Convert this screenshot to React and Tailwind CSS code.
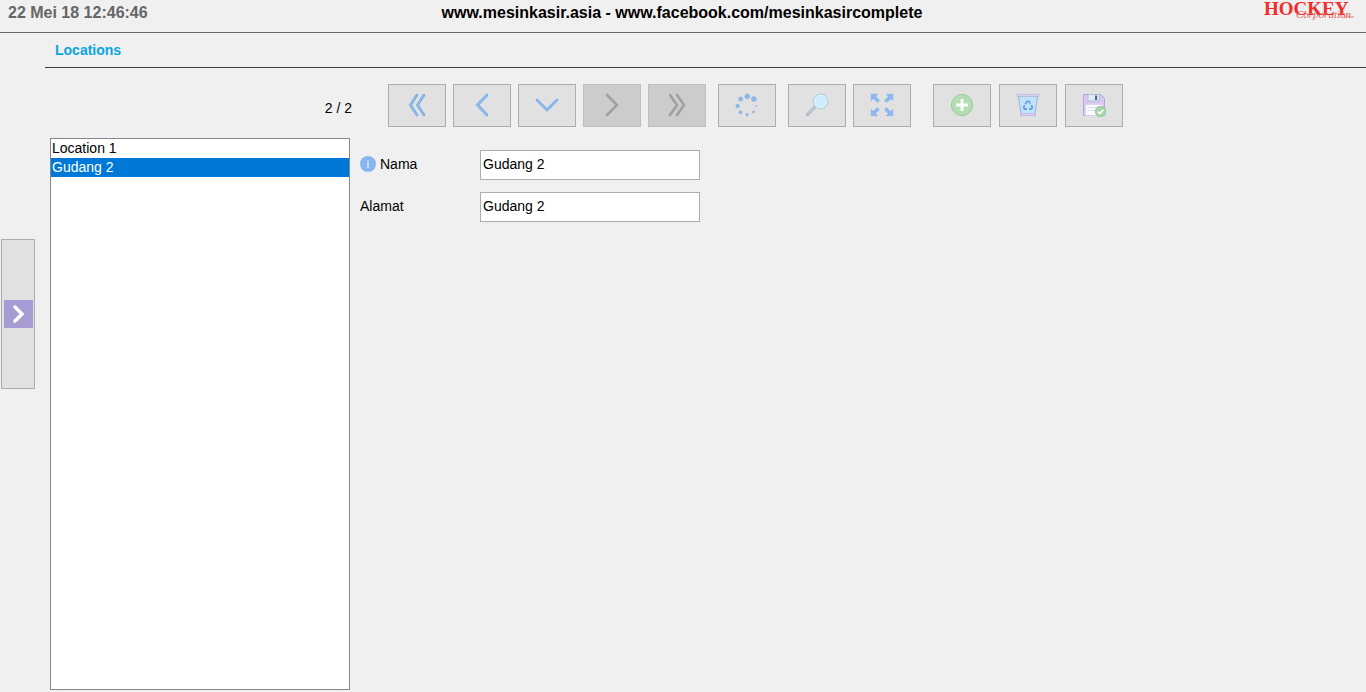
import React, { useState } from 'react';
import clsx from 'clsx';

const initialLocations = [
  { id: 1, name: 'Location 1', address: 'Location 1' },
  { id: 2, name: 'Gudang 2', address: 'Gudang 2' },
];

function Chevrons({ points, disabled }) {
  return (
    <svg width="24" height="24" viewBox="0 0 24 24" fill="none" strokeLinecap="round" strokeLinejoin="miter">
      {points.map((p) => (
        <g key={p}>
          <polyline points={p} stroke={disabled ? '#a0a0a0' : '#76a3dc'} strokeWidth="2.6" />
          {!disabled && <polyline points={p} stroke="#8fc4fa" strokeWidth="1.2" />}
        </g>
      ))}
    </svg>
  );
}

function SpinnerIcon() {
  const dots = [
    [12.3, 3.4, 2.4], [18.9, 6, 2.4], [21.3, 13, 0.6], [18.6, 19, 1],
    [12, 21.8, 1.2], [5.4, 19.3, 1.5], [2.7, 13, 1.8], [5.6, 6, 2.1],
  ];
  return (
    <svg width="24" height="24" viewBox="0 0 24 24" fill="#8ab8f2" stroke="#7aa5dd" strokeWidth="0.5">
      {dots.map(([x, y, r]) => (
        <circle key={`${x}-${y}`} cx={x} cy={y} r={r} />
      ))}
    </svg>
  );
}

function SearchIcon() {
  return (
    <svg width="24" height="24" viewBox="0 0 24 24" fill="none" strokeLinecap="round">
      <path d="M2.5 21.5 L10.5 13.5" stroke="#9aaab8" strokeWidth="3" />
      <path d="M2.7 21.3 L10.3 13.7" stroke="#c9d3e4" strokeWidth="1.4" />
      <circle cx="15.5" cy="8.5" r="7.3" fill="#d0ebff" stroke="#a9c6d6" strokeWidth="1" />
      <circle cx="15.5" cy="8.5" r="6.3" stroke="#dcfaff" strokeWidth="1" />
    </svg>
  );
}

function ExpandIcon() {
  return (
    <svg width="24" height="24" viewBox="0 0 24 24" fill="#8ab8f5" stroke="#80aae4" strokeWidth="0.5">
      {[0, 90, 180, 270].map((deg) => (
        <path key={deg} transform={`rotate(${deg} 12 12)`} d="M1.2 1.2 H7.6 L5.8 3.4 L9.6 7.2 L7.4 9.4 L3.6 5.6 L1.2 7.6 Z" />
      ))}
    </svg>
  );
}

function AddIcon() {
  return (
    <svg width="24" height="24" viewBox="0 0 24 24">
      <circle cx="12" cy="12" r="10.6" fill="#b2deb2" stroke="#9fc9a5" />
      <path d="M12 6 V18 M6 12 H18" stroke="#fff" strokeWidth="2.8" />
    </svg>
  );
}

function TrashIcon() {
  return (
    <svg width="24" height="24" viewBox="0 0 24 24">
      <path d="M2.5 3 H21.5 L18.9 21.5 H5.1 Z" fill="#bde4fd" stroke="#99b6dc" />
      <rect x="1.2" y="1.2" width="21.6" height="2.2" fill="#dacdf0" stroke="#b9addb" strokeWidth="0.6" />
      <rect x="4.3" y="20.7" width="15.4" height="2.1" fill="#dacdf0" stroke="#b9addb" strokeWidth="0.6" />
      <g fill="none" stroke="#709cd8" strokeWidth="1.8">
        <path d="M9.2 11.3 L11 8.3 H13 L14.3 10.6" />
        <path d="M15.2 12.2 L16.4 14.5 L15.4 16 H13" />
        <path d="M11 16 H8.5 L7.6 14.5 L8.7 12.4" />
      </g>
    </svg>
  );
}

function SaveIcon() {
  return (
    <svg width="24" height="24" viewBox="0 0 24 24">
      <path d="M1.5 1.5 H18.5 L22.5 5.5 V22.5 H1.5 Z" fill="#d9c9ef" stroke="#b7a5d6" />
      <rect x="6" y="1.5" width="11.5" height="6.5" fill="#dfeaf5" stroke="#a9b5ca" strokeWidth="0.8" />
      <rect x="13" y="2.5" width="2.2" height="4.5" fill="#52658f" />
      <rect x="3.5" y="11.5" width="17" height="11" fill="#f8f9ff" stroke="#d4cde5" strokeWidth="0.6" />
      <path d="M5.5 14.5 H16 M5.5 17.5 H13" stroke="#dde0ec" />
      <circle cx="18.5" cy="18.5" r="5.2" fill="#a5d5a7" stroke="#8fc295" strokeWidth="0.8" />
      <path d="M15.8 18.6 L17.8 20.6 L21.4 16.6" fill="none" stroke="#fff" strokeWidth="1.6" />
    </svg>
  );
}

function Logo() {
  return (
    <svg
      width="92"
      height="22"
      viewBox="0 0 92 22"
      role="img"
      aria-label="Hockey Corporation"
      className="overflow-visible"
    >
      <text x="0" y="14" fontFamily="'Liberation Serif', serif" fontWeight="700" fontSize="19" fill="#f22b2b">
        HOCKEY
      </text>
      <text x="32" y="17" fontFamily="'Liberation Serif', serif" fontStyle="italic" fontWeight="400" fontSize="11" fill="#e0605f">
        Corporation
      </text>
      <path d="M80 17 C83 15 84 14 85 16 C86 17 88 15 90 16" fill="none" stroke="#e0605f" strokeWidth="0.8" />
    </svg>
  );
}

function ToolButton({ label, disabled, onClick, children }) {
  return (
    <button
      type="button"
      aria-label={label}
      disabled={disabled}
      onClick={onClick}
      className={clsx(
        'flex h-[43px] w-[58px] items-center justify-center border pb-px',
        disabled ? 'border-[#bfbfbf] bg-[#cccccc]' : 'border-[#adadad] bg-[#e1e1e1] hover:bg-[#e5f1fb]'
      )}
    >
      {children}
    </button>
  );
}

export default function App() {
  const [locations, setLocations] = useState(initialLocations);
  const [selected, setSelected] = useState(1);

  const current = locations[selected];
  const isFirst = selected === 0;
  const isLast = selected === locations.length - 1;

  const updateField = (field, value) => {
    setLocations((prev) => prev.map((loc, i) => (i === selected ? { ...loc, [field]: value } : loc)));
  };

  return (
    <div className="flex min-h-screen flex-col bg-[#f0f0f0] font-['Liberation_Sans',Arial,sans-serif] text-sm text-black">
      <header className="grid h-[33px] grid-cols-[1fr_auto_1fr] items-start border-b border-[#696969] pt-px pr-[10px] pl-2 font-bold">
        <time className="text-base text-[#666666]">22 Mei 18 12:46:46</time>
        <p className="text-base">www.mesinkasir.asia - www.facebook.com/mesinkasircomplete</p>
        <div className="flex justify-end">
          <Logo />
        </div>
      </header>

      <div className="flex flex-1">
        <aside className="w-[45px] shrink-0 pt-[206px] pl-px">
          <button
            type="button"
            aria-label="Open menu"
            className="flex h-[150px] w-[34px] items-center justify-center border border-[#adadad] bg-[#e1e1e1]"
          >
            <svg width="30" height="28" viewBox="0 0 30 28">
              <rect x="1" width="29" height="28" fill="#a69bd2" />
              <path d="M12 7 L19 14 L12 21" fill="none" stroke="#fff" strokeWidth="3.5" strokeLinecap="round" />
            </svg>
          </button>
        </aside>

        <main className="flex flex-1 flex-col">
          <div className="h-[35px] border-b border-[#404040] pt-[7px] pl-[10px]">
            <h1 className="font-bold text-[#0aa5de]">Locations</h1>
          </div>

          <div className="flex items-center gap-9 pt-4 pl-[5px]">
            <span className="mt-1 w-[302px] text-right">
              {selected + 1} / {locations.length}
            </span>
            <div className="flex gap-3">
              <div className="flex gap-[7px]">
                <ToolButton label="First" disabled={isFirst} onClick={() => setSelected(0)}>
                  <Chevrons points={['12 2 5.5 12 12 22', '19 2 12.5 12 19 22']} disabled={isFirst} />
                </ToolButton>
                <ToolButton label="Previous" disabled={isFirst} onClick={() => setSelected(selected - 1)}>
                  <Chevrons points={['17 2 7.5 12 17 22']} disabled={isFirst} />
                </ToolButton>
                <ToolButton label="Refresh">
                  <Chevrons points={['2 7 12 17 22 7']} />
                </ToolButton>
                <ToolButton label="Next" disabled={isLast} onClick={() => setSelected(selected + 1)}>
                  <Chevrons points={['7 2 17 12 7 22']} disabled={isLast} />
                </ToolButton>
                <ToolButton label="Last" disabled={isLast} onClick={() => setSelected(locations.length - 1)}>
                  <Chevrons points={['5 2 12 12 5 22', '12 2 19 12 12 22']} disabled={isLast} />
                </ToolButton>
              </div>
              <ToolButton label="Reload">
                <SpinnerIcon />
              </ToolButton>
              <div className="flex gap-[7px]">
                <ToolButton label="Search">
                  <SearchIcon />
                </ToolButton>
                <ToolButton label="Sort">
                  <ExpandIcon />
                </ToolButton>
              </div>
              <div className="ml-[10px] flex gap-2">
                <ToolButton label="Add">
                  <AddIcon />
                </ToolButton>
                <ToolButton label="Delete">
                  <TrashIcon />
                </ToolButton>
                <ToolButton label="Save">
                  <SaveIcon />
                </ToolButton>
              </div>
            </div>
          </div>

          <div className="flex flex-1 gap-[10px] pt-[11px] pb-[2px] pl-[5px]">
            <ul className="w-[300px] border border-[#828790] bg-white">
              {locations.map((loc, index) => (
                <li key={loc.id}>
                  <button
                    type="button"
                    onClick={() => setSelected(index)}
                    className={clsx(
                      'block h-[19px] w-full px-px text-left leading-[19px]',
                      index === selected ? 'bg-[#0078d7] text-white' : 'text-black'
                    )}
                  >
                    {loc.name}
                  </button>
                </li>
              ))}
            </ul>

            <form className="flex flex-col gap-3 pt-3" onSubmit={(e) => e.preventDefault()}>
              <div className="flex items-center">
                <label htmlFor="name" className="flex w-[120px] items-center gap-1 pb-[2px]">
                  <svg width="16" height="16" viewBox="0 0 16 16">
                    <circle cx="8" cy="8" r="8" fill="#8ab6f0" />
                    <path d="M8 6.5 V12 M8 4 V5.5" stroke="#d5e6fb" strokeWidth="1.6" />
                  </svg>
                  Nama
                </label>
                <input
                  id="name"
                  type="text"
                  value={current.name}
                  onChange={(e) => updateField('name', e.target.value)}
                  className="h-[30px] w-[220px] border border-[#abadb3] bg-white px-[2px] pb-[2px] outline-none"
                />
              </div>
              <div className="flex items-center">
                <label htmlFor="address" className="w-[120px] pb-[2px]">
                  Alamat
                </label>
                <input
                  id="address"
                  type="text"
                  value={current.address}
                  onChange={(e) => updateField('address', e.target.value)}
                  className="h-[30px] w-[220px] border border-[#abadb3] bg-white px-[2px] pb-[2px] outline-none"
                />
              </div>
            </form>
          </div>
        </main>
      </div>
    </div>
  );
}
